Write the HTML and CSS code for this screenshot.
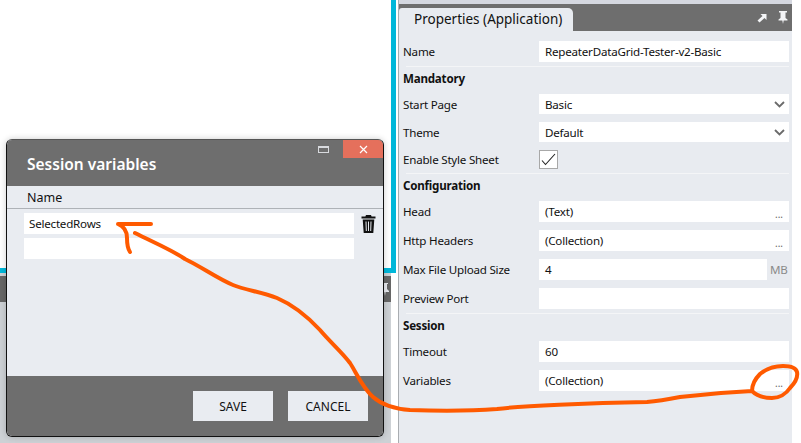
FILE: index.html
```html
<!DOCTYPE html>
<html lang="en">
<head>
  <meta charset="UTF-8">
  <title>Session variables</title>
  <link rel="stylesheet" href="styles.css">
</head>
<body>

  <div class="workspace">
    <div class="canvas"></div>
    <div class="canvas-edge"></div>
    <div class="dock-gap"></div>
    <div class="dock-bar">
      <svg class="dock-pin" width="10" height="14" viewBox="0 0 10 14"><path d="M2 1h6v1H7v5l2 2v1H5.6L5 14l-.6-4H1V9l2-2V2H2z" fill="#e8ebf0"/></svg>
    </div>
    <div class="dock-rest"></div>
  </div>

  <div class="side-line"></div>

  <div class="props">
    <div class="props-top"></div>
    <div class="props-head">
      <div class="tab">Properties (Application)</div>
      <div class="head-icons">
        <svg width="10" height="10" viewBox="0 0 10 10"><path d="M3.5 1H9.500V7L7.500 5 2.500 9.500 .5 7.500 5.500 3z" fill="#f4f5f7"/></svg>
        <svg width="10" height="13" viewBox="0 0 10 13"><path d="M1 0h8v1.500H7.500V7L9.500 8.500V9.500H5.700L5 13 4.300 9.500H.5V8.500L2.500 7V1.500H1z" fill="#f4f5f7"/></svg>
      </div>
    </div>

    <div class="props-body">
      <div class="rows">
        <div class="row"><label>Name</label><div class="field">RepeaterDataGrid-Tester-v2-Basic</div></div>
      </div>

      <div class="section">
        <h4>Mandatory</h4>
        <div class="rows">
          <div class="row short"><label>Start Page</label><div class="field select">Basic<svg width="11" height="7" viewBox="0 0 11 7"><path d="M1 1l4.500 4.500L10 1" fill="none" stroke="#6b6b6b" stroke-width="1.800"/></svg></div></div>
          <div class="row short"><label>Theme</label><div class="field select">Default<svg width="11" height="7" viewBox="0 0 11 7"><path d="M1 1l4.500 4.500L10 1" fill="none" stroke="#6b6b6b" stroke-width="1.800"/></svg></div></div>
          <div class="row check-row"><label>Enable Style Sheet</label>
            <div class="check"><svg width="15" height="13" viewBox="0 0 15 13"><path d="M1 7.500l3.500 4L14 1" fill="none" stroke="#222" stroke-width="1.100"/></svg></div>
          </div>
        </div>
      </div>

      <div class="section">
        <h4>Configuration</h4>
        <div class="rows">
          <div class="row"><label>Head</label><div class="field more">(Text)<span class="dots">...</span></div></div>
          <div class="row"><label>Http Headers</label><div class="field more">(Collection)<span class="dots">...</span></div></div>
          <div class="row"><label>Max File Upload Size</label><div class="field num">4</div><span class="unit">MB</span></div>
          <div class="row"><label>Preview Port</label><div class="field"></div></div>
        </div>
      </div>

      <div class="section">
        <h4>Session</h4>
        <div class="rows">
          <div class="row"><label>Timeout</label><div class="field">60</div></div>
          <div class="row"><label>Variables</label><div class="field more">(Collection)<span class="dots">...</span></div></div>
        </div>
      </div>
    </div>
  </div>

  <div class="dialog">
    <div class="dialog-head">
      <div class="win-btns">
        <span class="max-btn"></span>
        <span class="close-btn">
          <svg width="9" height="9" viewBox="0 0 9 9"><path d="M1 1l7 7M8 1L1 8" stroke="#fff" stroke-width="1.200"/></svg>
        </span>
      </div>
      <h3>Session variables</h3>
    </div>
    <div class="dialog-body">
      <div class="col-head">Name</div>
      <div class="var-rows">
        <div class="var-row">
          <div class="var-input">SelectedRows</div>
          <svg class="trash" width="15" height="18" viewBox="0 0 15 18"><path d="M5 0h5l.6 1.500H14.500V3.500H.5V1.500H4.400zM1.700 4.500H13.300L12.300 18H2.700z" fill="#111"/><path d="M5 6.500l.3 9.500M7.500 6.500V16M10 6.500L9.700 16" stroke="#e8ebf0" stroke-width="1"/></svg>
        </div>
        <div class="var-row">
          <div class="var-input"></div>
        </div>
      </div>
    </div>
    <div class="dialog-foot">
      <button>SAVE</button>
      <button>CANCEL</button>
    </div>
  </div>

  <!-- hand drawn arrow on top of the screenshot -->
  <svg class="scribble" width="801" height="443" viewBox="0 0 801 443">
    <g fill="none" stroke="#ff5a00" stroke-linecap="round" stroke-linejoin="round">
      <path stroke-width="4" d="M151 224H118C123 226 127 230 127 238C127 244 128 249 130 252"/>
      <path stroke-width="4" d="M135 233C155 243 172 250 185 259C200 266 218 279 233 285C245 290 262 292 277 298C291 304 307 316 320 330C330 342 342 352 350 363C356 372 362 387 373 397C381 404 395 409 410 410C440 411 470 411 497 409C520 406 590 403 647 402C660 401 670 399 680 397C705 394 730 392 752 391C757 396 764 398 772 398C779 398 786 394 790 388C795 383 798 377 797 372C796 368 790 366 783 366C775 366 766 369 760 374C755 379 752 385 752 391"/>
    </g>
  </svg>

</body>
</html>
```

FILE: styles.css
```css
* {
  box-sizing: border-box;
}

html, body {
  margin: 0;
  height: 443px;
  overflow: hidden;
}

body {
  display: flex;
  background-color: white;
  font-family: 'Noto Sans', sans-serif;
  font-size: 11.600px;
  letter-spacing: -0.220px;
  color: #111;
}

/* left side */
.workspace {
  width: 391px;
  display: flex;
  flex-direction: column;
}

.canvas {
  height: 268px;
  background-color: white;
}

.canvas-edge {
  height: 5px;
  background-color: #00b7d9;
}

.dock-gap {
  height: 3px;
  background-color: #cdd1d5;
}

.dock-bar {
  height: 26px;
  background-color: #666;
  display: flex;
  justify-content: flex-end;
  align-items: center;
  padding-right: 1px;
}

.dock-rest {
  flex: 1;
  background-color: #cdd1d5;
}

.side-line {
  width: 5px;
  height: 273px;
  background-color: #00b7d9;
}

/* properties panel */
.props {
  width: 394px;
  margin-left: 2px;
  border-left: 1px solid #a9adb1;
  background-color: #e8ebf0;
  display: flex;
  flex-direction: column;
}

.props-top {
  height: 4px;
  background-color: #d5d8e0;
}

.props-head {
  height: 27px;
  background-color: #6e6e6e;
  display: flex;
  justify-content: space-between;
  align-items: flex-end;
}

.tab {
  width: 174px;
  height: 23px;
  padding-left: 15px;
  background-color: #e8ebf0;
  border-radius: 3px 5px 0 0;
  font-size: 13.500px;
  letter-spacing: 0;
  line-height: 22px;
  color: #111;
}

.head-icons {
  display: flex;
  align-items: center;
  gap: 11px;
  height: 27px;
  padding-right: 4px;
}

.props-body {
  padding: 10px 3px 0 4px;
}

.rows {
  display: flex;
  flex-direction: column;
  gap: 8px;
}

.row {
  display: flex;
  align-items: center;
  height: 21px;
}

.row.short {
  height: 20px;
}

.row.check-row {
  height: 19px;
}

.row label {
  width: 136px;
}

.field {
  flex: 1;
  height: 100%;
  background-color: white;
  padding-left: 6px;
  line-height: 21px;
  color: #111;
}

.field.select, .field.more {
  display: flex;
  justify-content: space-between;
  align-items: center;
  padding-right: 6px;
}

.field.select svg {
  margin-right: -2px;
}

.dots {
  font-size: 10px;
  letter-spacing: 0;
  color: #666;
  line-height: 8px;
  align-self: flex-end;
  padding-bottom: 2px;
  height: 12px;
}

.field.num {
  flex: none;
  width: 228px;
}

.unit {
  margin-left: 3px;
  color: #8a8a8a;
}

.check {
  width: 19px;
  height: 19px;
  background-color: white;
  border: 1px solid #a8a8a8;
  display: flex;
  align-items: center;
  justify-content: center;
}

.section {
  margin-top: 4px;
  background: linear-gradient(#f4f5f7, #f4f5f7) no-repeat 3px 0 / 100% 1px;
}

.section h4 {
  margin: 0;
  height: 28px;
  line-height: 26px;
  font-size: 11.600px;
  font-weight: bold;
}

/* dialog, sits over the workspace */
.dialog {
  position: absolute;
  left: 6px;
  top: 139px;
  width: 378px;
  height: 298px;
  display: flex;
  flex-direction: column;
  background-color: #e9ecf1;
  border: 1px solid #111;
  border-top-color: #555;
  border-radius: 6px;
  box-shadow: 0 0 6px rgba(0,0,0,0.2);
  overflow: hidden;
}

.dialog-head {
  height: 46px;
  background-color: #6e6e6e;
  position: relative;
}

.dialog-head h3 {
  margin: 0;
  padding: 14px 0 0 20px;
  color: white;
  font-size: 15.500px;
  font-weight: 600;
  line-height: 20px;
  letter-spacing: 0;
}

.win-btns {
  position: absolute;
  top: 0;
  right: 0;
  display: flex;
}

.max-btn {
  width: 11px;
  height: 7px;
  margin: 6px 14px 0 0;
  border: 1.500px solid #d8dade;
  border-top-width: 2px;
}

.close-btn {
  width: 40px;
  height: 18px;
  background-color: #e5705c;
  display: flex;
  align-items: center;
  justify-content: center;
}

.dialog-body {
  flex: 1;
}

.col-head {
  height: 23px;
  padding-left: 20px;
  line-height: 23px;
  font-size: 12.500px;
  letter-spacing: 0;
  border-bottom: 1px solid #aeb2b7;
}

.var-rows {
  display: flex;
  flex-direction: column;
  gap: 4px;
  padding: 4px 0 0 17px;
}

.var-row {
  display: flex;
  align-items: center;
  gap: 7px;
}

.var-input {
  width: 330px;
  height: 21px;
  background-color: white;
  padding-left: 5px;
  line-height: 21px;
}

.dialog-foot {
  height: 60px;
  background-color: #6e6e6e;
  display: flex;
  justify-content: flex-end;
  gap: 15px;
  padding: 15px 15px 0 0;
}

.dialog-foot button {
  width: 80px;
  height: 30px;
  border: none;
  background-color: #e9ecf1;
  font-family: inherit;
  font-size: 12px;
  color: #111;
}

.scribble {
  position: absolute;
  left: 0;
  top: 0;
  pointer-events: none;
}
```
